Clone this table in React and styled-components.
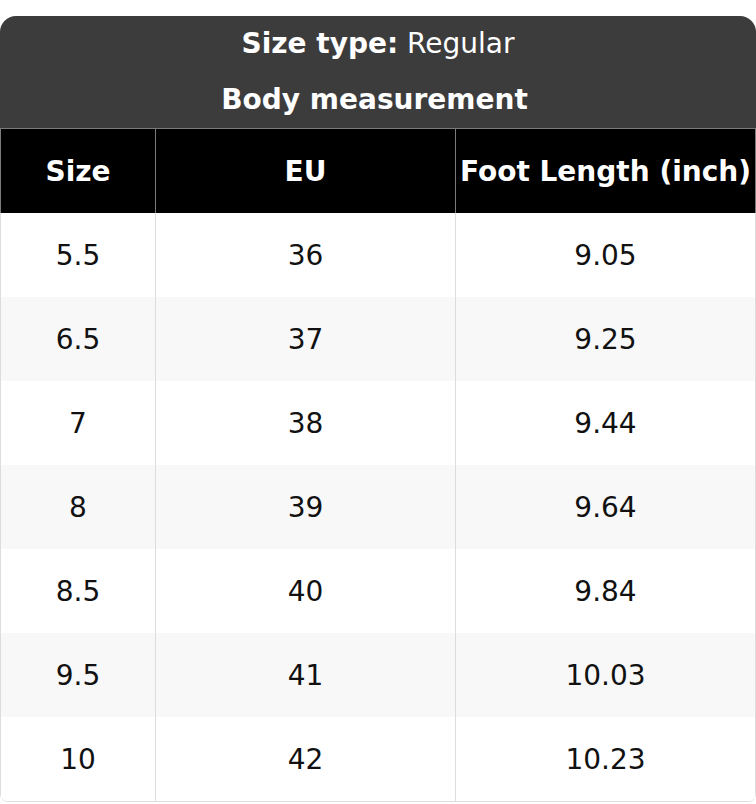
import React from "react";
import styled, { createGlobalStyle } from "styled-components";

const Global = createGlobalStyle`
  html, body { margin: 0; padding: 0; background: #ffffff; }
  body { font-family: "DejaVu Sans", "Liberation Sans", sans-serif; }
`;

const Page = styled.div`
  padding-top: 16px;
  width: 756px;
`;

const Card = styled.div`
  border-radius: 16px 16px 8px 8px;
  overflow: hidden;
  border-bottom: 1px solid #dddddd;
  background: #ffffff;
`;

const Title = styled.div`
  background: #3c3c3c;
  color: #ffffff;
  text-align: center;
  font-size: 28px;
  border-bottom: 1px solid #7a7a7a;
`;

const TitleLine = styled.div`
  height: 56px;
  line-height: 56px;
  font-weight: ${(p) => (p.$bold ? 700 : 400)};
  padding-right: ${(p) => (p.$bold ? "7px" : "0")};
`;

const Strong = styled.span`
  font-weight: 700;
`;

const Row = styled.div`
  display: grid;
  grid-template-columns: 155px 300px 1fr;
  height: 84px;
  background: ${(p) => (p.$head ? "#000000" : p.$alt ? "#f8f8f8" : "#ffffff")};
  color: ${(p) => (p.$head ? "#ffffff" : "#111111")};
  font-weight: ${(p) => (p.$head ? 700 : 400)};
  font-size: 28px;
`;

const Cell = styled.div`
  display: flex;
  align-items: center;
  justify-content: center;
  white-space: nowrap;
  border-left: 1px solid ${(p) => (p.$head ? "#7a7a7a" : "#dddddd")};
  &:last-child {
    border-right: 1px solid ${(p) => (p.$head ? "#7a7a7a" : "#dddddd")};
  }
`;

const data = [
  ["5.5", "36", "9.05"],
  ["6.5", "37", "9.25"],
  ["7", "38", "9.44"],
  ["8", "39", "9.64"],
  ["8.5", "40", "9.84"],
  ["9.5", "41", "10.03"],
  ["10", "42", "10.23"],
];

export default function App() {
  return (
    <Page>
      <Global />
      <Card>
        <Title>
          <TitleLine>
            <Strong>Size type:</Strong> Regular
          </TitleLine>
          <TitleLine $bold>Body measurement</TitleLine>
        </Title>
        <Row $head>
          <Cell $head>Size</Cell>
          <Cell $head>EU</Cell>
          <Cell $head>Foot Length (inch)</Cell>
        </Row>
        {data.map((r, i) => (
          <Row key={i} $alt={i % 2 === 1}>
            {r.map((v, j) => (
              <Cell key={j}>{v}</Cell>
            ))}
          </Row>
        ))}
      </Card>
    </Page>
  );
}
